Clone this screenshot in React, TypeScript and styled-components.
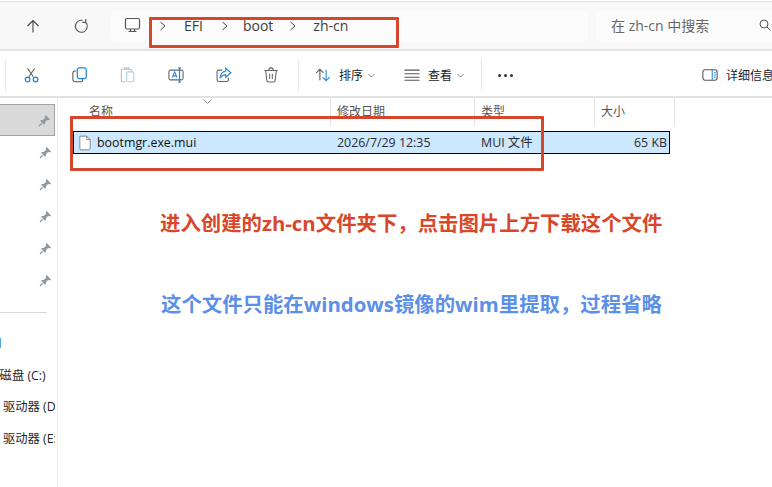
import React from "react";
import styled, { createGlobalStyle } from "styled-components";

const GlobalStyle = createGlobalStyle`
  html, body {
    margin: 0;
    padding: 0;
    background: #fff;
  }
  body {
    font-family: "Open Sans", "Noto Sans CJK SC", sans-serif;
  }
`;

const Window = styled.div`
  position: relative;
  width: 772px;
  height: 487px;
  overflow: hidden;
  display: flex;
  flex-direction: column;
  background: #fff;
  color: #1c1c1c;
`;

const NavBar = styled.div`
  height: 47px;
  margin-top: 1px;
  border-top: 1px solid #e2e2e2;
  border-bottom: 2px solid #e2e2e2;
  background: #f8f8f8;
  display: flex;
  align-items: center;
  padding-left: 24px;
`;

const NavButton = styled.div<{ $left: number }>`
  width: 18px;
  height: 18px;
  margin-left: ${(p) => p.$left}px;
  display: flex;
`;

const AddressBox = styled.div`
  width: 477px;
  height: 32px;
  margin-left: 21px;
  border-radius: 5px;
  background: #fcfcfc;
  display: flex;
  align-items: center;
  box-sizing: border-box;
  padding-left: 13px;
  font-size: 14px;
  color: #3c3c3c;
`;

const MonitorIcon = styled.svg`
  width: 17px;
  height: 17px;
  flex: none;
  fill: none;
  stroke: #555;
  stroke-width: 1.2;
`;

const Crumb = styled.span<{ $gap: number }>`
  margin-left: ${(p) => p.$gap}px;
`;

const Chevron = styled.svg<{ $gap: number }>`
  width: 8px;
  height: 10px;
  margin-left: ${(p) => p.$gap}px;
  fill: none;
  stroke: #444;
  stroke-width: 1;
`;

const SearchBox = styled.div`
  flex: 1;
  height: 32px;
  margin-left: 8px;
  border-radius: 5px 0 0 5px;
  background: #fcfcfc;
  display: flex;
  align-items: center;
  justify-content: space-between;
  box-sizing: border-box;
  padding: 0 1px 1px 15px;
  font-size: 14px;
  color: #666;
  white-space: nowrap;
`;

const Toolbar = styled.div`
  height: 42px;
  padding-top: 3px;
  border-bottom: 2px solid #e2e2e2;
  display: flex;
  align-items: center;
  font-size: 12px;
  color: #222;
  white-space: nowrap;
`;

const ToolDivider = styled.div<{ $left: number }>`
  width: 1px;
  height: 32px;
  flex: none;
  margin-left: ${(p) => p.$left}px;
  background: #e9e9e9;
`;

const ToolIcon = styled.svg<{ $left: number }>`
  width: 16px;
  height: 16px;
  flex: none;
  margin-left: ${(p) => p.$left}px;
  fill: none;
  stroke-width: 1.2;
`;

const ToolLabel = styled.span<{ $left: number }>`
  margin-left: ${(p) => p.$left}px;
`;

const Caret = styled.svg`
  width: 7px;
  height: 5px;
  flex: none;
  margin-left: 5px;
  fill: none;
  stroke: #888;
  stroke-width: 1;
`;

const Dots = styled.div`
  display: flex;
  flex: none;
  gap: 3px;
  margin-left: 16px;
`;

const Dot = styled.i`
  width: 3px;
  height: 3px;
  border-radius: 50%;
  background: #333;
`;

const Body = styled.div`
  flex: 1;
  display: flex;
  min-height: 0;
`;

const Sidebar = styled.div`
  width: 57px;
  flex: none;
  overflow: hidden;
  border-right: 1px solid #f0f0f0;
  padding-top: 6px;
  font-size: 12.3px;
  color: #1f1f1f;
  white-space: nowrap;
`;

const PinRow = styled.div<{ $selected?: boolean }>`
  height: 32px;
  box-sizing: border-box;
  display: flex;
  align-items: center;
  justify-content: flex-end;
  padding-right: 3px;
  width: 55px;
  ${(p) =>
    p.$selected
      ? "background: #dadada; border: 1px solid #a3a3a3; border-left: none;"
      : ""}
`;

const SideRule = styled.div`
  width: 47px;
  height: 1px;
  margin-top: 16px;
  background: #d8d8d8;
`;

const FolderSliver = styled.div`
  width: 1px;
  height: 10px;
  margin-top: 25px;
  background: #56a8ee;
`;

const DriveRow = styled.div<{ $top: number; $left: number }>`
  line-height: 16px;
  width: ${(p) => 55 - p.$left}px;
  overflow: hidden;
  margin-top: ${(p) => p.$top}px;
  margin-left: ${(p) => p.$left}px;
`;

const Main = styled.div`
  flex: 1;
  min-width: 0;
  display: flex;
  flex-direction: column;
`;

const HeaderRow = styled.div`
  height: 27px;
  display: flex;
  font-size: 12px;
  color: #555;
  padding-left: 30px;
  position: relative;
`;

const HeaderCell = styled.div<{ $width: number }>`
  width: ${(p) => p.$width}px;
  box-sizing: border-box;
  border-right: 1px solid #e4e4e4;
  line-height: 28px;
  padding-left: ${(p) => (p.$width > 200 ? 1 : 6)}px;
`;

const SortMark = styled.svg`
  position: absolute;
  left: 145px;
  top: 1px;
  width: 9px;
  height: 5px;
  fill: none;
  stroke: #999;
  stroke-width: 1;
`;

const FileRow = styled.div`
  width: 597px;
  height: 23px;
  margin: 6px 0 0 15px;
  box-sizing: border-box;
  border: 1px solid #000;
  background: #cce8ff;
  display: flex;
  align-items: center;
  font-size: 12.4px;
  line-height: 23px;
  color: #2b2b2b;
  white-space: nowrap;
`;

const FileIcon = styled.svg`
  width: 12px;
  height: 16px;
  margin-left: 5px;
  flex: none;
`;

const FileName = styled.span`
  width: 240px;
  flex: none;
  margin-left: 6px;
  font-size: 12.4px;
  color: #111;
`;

const FileDate = styled.span`
  width: 144px;
  flex: none;
`;

const FileType = styled.span`
  width: 118px;
  flex: none;
`;

const FileSize = styled.span`
  width: 68px;
  flex: none;
  text-align: right;
`;

const Note = styled.div<{ $color: string; $left: number }>`
  margin-top: 57px;
  margin-left: ${(p) => p.$left}px;
  font-size: 20.4px;
  line-height: 24px;
  font-weight: 700;
  color: ${(p) => p.$color};
  white-space: nowrap;
`;

const Highlight = styled.div<{
  $x: number;
  $y: number;
  $w: number;
  $h: number;
}>`
  position: absolute;
  left: ${(p) => p.$x}px;
  top: ${(p) => p.$y}px;
  width: ${(p) => p.$w}px;
  height: ${(p) => p.$h}px;
  box-sizing: border-box;
  border: 3px solid #d5472d;
  border-radius: 1px;
`;

const Pin = () => (
  <svg width="13" height="13" viewBox="0 0 13 13">
    <path d="M7.6 1 12 5.4 10.8 6.2 8.9 6 7 8.4 7 10 6 10.8 2.2 7 3 6 4.6 6 7 4.1 6.8 2.2Z" fill="#8f979f" />
    <path d="M3.6 9.4 1 12" stroke="#8f979f" strokeWidth="1.3" />
  </svg>
);

const App = () => {
  return (
    <Window>
      <GlobalStyle />
      <NavBar>
        <NavButton $left={0}>
          <svg width="18" height="18" viewBox="0 0 18 18" fill="none" stroke="#444" strokeWidth="1.1">
            <path d="M9 15.5V3.5M3.5 9 9 3.5 14.5 9" />
          </svg>
        </NavButton>
        <NavButton $left={30}>
          <svg width="18" height="18" viewBox="0 0 18 18" fill="none" stroke="#555" strokeWidth="1.1">
            <path d="M13.5 5a6 6 0 1 1-3-1.6M13.8 2v3.4h-3.4" />
          </svg>
        </NavButton>
        <AddressBox>
          <MonitorIcon viewBox="0 0 17 17">
            <rect x="1.5" y="1.5" width="14" height="10.5" rx="1.5" />
            <path d="M6.5 12v2M10.5 12v2M4.5 14.5h8" />
          </MonitorIcon>
          <Chevron $gap={18} viewBox="0 0 8 10"><path d="M1.5 1 6 5 1.5 9" /></Chevron>
          <Crumb $gap={17}>EFI</Crumb>
          <Chevron $gap={18} viewBox="0 0 8 10"><path d="M1.5 1 6 5 1.5 9" /></Chevron>
          <Crumb $gap={14}>boot</Crumb>
          <Chevron $gap={16} viewBox="0 0 8 10"><path d="M1.5 1 6 5 1.5 9" /></Chevron>
          <Crumb $gap={16}>zh-cn</Crumb>
        </AddressBox>
        <SearchBox>
          在 zh-cn 中搜索
          <svg width="12" height="12" viewBox="0 0 12 12" fill="none" stroke="#555" strokeWidth="1">
            <circle cx="5" cy="5" r="4" />
            <path d="M8 8l3.5 3.5" />
          </svg>
        </SearchBox>
      </NavBar>

      <Toolbar>
        <ToolDivider $left={5} />
        <ToolIcon $left={18} viewBox="0 0 18 18">
          <path d="M4 1.5 10.5 11M12 1.5 5.5 11" stroke="#666" />
          <circle cx="4" cy="14" r="2.6" stroke="#1c86e0" strokeWidth="1.4" />
          <circle cx="13" cy="14" r="2.6" stroke="#1c86e0" strokeWidth="1.4" />
        </ToolIcon>
        <ToolIcon $left={32} viewBox="0 0 18 18">
          <path d="M4.5 4.5H3a2 2 0 0 0-2 2V14a2.5 2.5 0 0 0 2.5 2.5H10a2 2 0 0 0 2-2V13.5" stroke="#555" />
          <rect x="6" y="1" width="10" height="12" rx="2" stroke="#1c86e0" strokeWidth="1.4" />
        </ToolIcon>
        <ToolIcon $left={32} viewBox="0 0 18 18">
          <path d="M6 16.5H3a1.5 1.5 0 0 1-1.5-1.5V4A1.5 1.5 0 0 1 3 2.5h9A1.5 1.5 0 0 1 13.5 4v1M5 2.5V1.2h5v1.3" stroke="#bdbdbd" />
          <rect x="7.5" y="5.5" width="8" height="11" rx="1.5" stroke="#a8d0f2" />
        </ToolIcon>
        <ToolIcon $left={32} viewBox="0 0 18 18">
          <rect x="1" y="3.5" width="16" height="11" rx="2" stroke="#666" />
          <path d="M4.8 12 7.5 5.5 10.2 12M5.7 10h3.6" stroke="#1c86e0" />
          <path d="M11.5 1h3M13 1v16M11.5 17h3" stroke="#1c86e0" strokeWidth="1.3" />
        </ToolIcon>
        <ToolIcon $left={32} viewBox="0 0 18 18">
          <path d="M7 3.5H3A1.8 1.8 0 0 0 1.2 5.3V14.5A2 2 0 0 0 3 16.3h9a2 2 0 0 0 2-2V12" stroke="#666" />
          <path d="M11 1.5 16.8 6.5 11 11.5V8.8C8 8.8 6 10 4.5 12.5 5 8.5 7 5 11 4.5Z" stroke="#1c86e0" strokeWidth="1.3" />
        </ToolIcon>
        <ToolIcon $left={31} viewBox="0 0 18 18">
          <path d="M1.5 4h15M6.5 3.5a2.5 2.5 0 0 1 5 0M3 4l1.3 11a2 2 0 0 0 2 1.8h5.4a2 2 0 0 0 2-1.8L15 4M7.5 7.500v6M10.5 7.5v6" stroke="#666" />
        </ToolIcon>
        <ToolDivider $left={19} />
        <ToolIcon $left={16} viewBox="0 0 18 18">
          <path d="M5.5 15V2.5M1.5 6.5l4-4 4 4" stroke="#555" />
          <path d="M12.5 3v12.5M8.5 11.5l4 4 4-4" stroke="#1c86e0" />
        </ToolIcon>
        <ToolLabel $left={8}>排序</ToolLabel>
        <Caret viewBox="0 0 7 5"><path d="M.5 1 3.5 4 6.5 1" /></Caret>
        <ToolIcon $left={29} viewBox="0 0 18 18">
          <path d="M.5 3.500h17M.5 7.500h17M.5 11.500h17M.5 15h17" stroke="#555" />
        </ToolIcon>
        <ToolLabel $left={8}>查看</ToolLabel>
        <Caret viewBox="0 0 7 5"><path d="M.5 1 3.5 4 6.5 1" /></Caret>
        <ToolDivider $left={17} />
        <Dots><Dot /><Dot /><Dot /></Dots>
        <ToolIcon $left={189} viewBox="0 0 18 18">
          <rect x="1" y="3" width="16" height="12" rx="2.5" stroke="#555" />
          <path d="M11.5 3v12" stroke="#1c86e0" />
          <path d="M13.5 6.5h2M13.5 9h2M13.5 11.5h2" stroke="#1c86e0" />
        </ToolIcon>
        <ToolLabel $left={8}>详细信息</ToolLabel>
      </Toolbar>

      <Body>
        <Sidebar>
          <PinRow $selected><Pin /></PinRow>
          <PinRow><Pin /></PinRow>
          <PinRow><Pin /></PinRow>
          <PinRow><Pin /></PinRow>
          <PinRow><Pin /></PinRow>
          <PinRow><Pin /></PinRow>
          <SideRule />
          <FolderSliver />
          <DriveRow $top={20} $left={-25}>本地磁盘 (C:)</DriveRow>
          <DriveRow $top={15} $left={3}>驱动器 (D:)</DriveRow>
          <DriveRow $top={16} $left={3}>驱动器 (E:)</DriveRow>
        </Sidebar>
        <Main>
          <HeaderRow>
            <SortMark viewBox="0 0 9 5"><path d="M.5.5 4.5 4.5 8.5.5" /></SortMark>
            <HeaderCell $width={243}>名称</HeaderCell>
            <HeaderCell $width={144}>修改日期</HeaderCell>
            <HeaderCell $width={120}>类型</HeaderCell>
            <HeaderCell $width={80}>大小</HeaderCell>
          </HeaderRow>
          <FileRow>
            <FileIcon viewBox="0 0 14 17" fill="none">
              <path d="M1 .5h8L13 4.5V15a1.5 1.5 0 0 1-1.5 1.5h-9A1.5 1.5 0 0 1 1 15Z" fill="#fff" stroke="#777" />
              <path d="M9 .5v4h4" stroke="#777" />
            </FileIcon>
            <FileName>bootmgr.exe.mui</FileName>
            <FileDate>2026/7/29 12:35</FileDate>
            <FileType>MUI 文件</FileType>
            <FileSize>65 KB</FileSize>
          </FileRow>
          <Note $color="#d9472b" $left={102}>进入创建的zh-cn文件夹下，点击图片上方下载这个文件</Note>
          <Note $color="#5b8fe8" $left={103}>这个文件只能在windows镜像的wim里提取，过程省略</Note>
        </Main>
      </Body>

      <Highlight $x={149} $y={17} $w={250} $h={31} />
      <Highlight $x={70} $y={116} $w={474} $h={55} />
    </Window>
  );
};

export default App;
